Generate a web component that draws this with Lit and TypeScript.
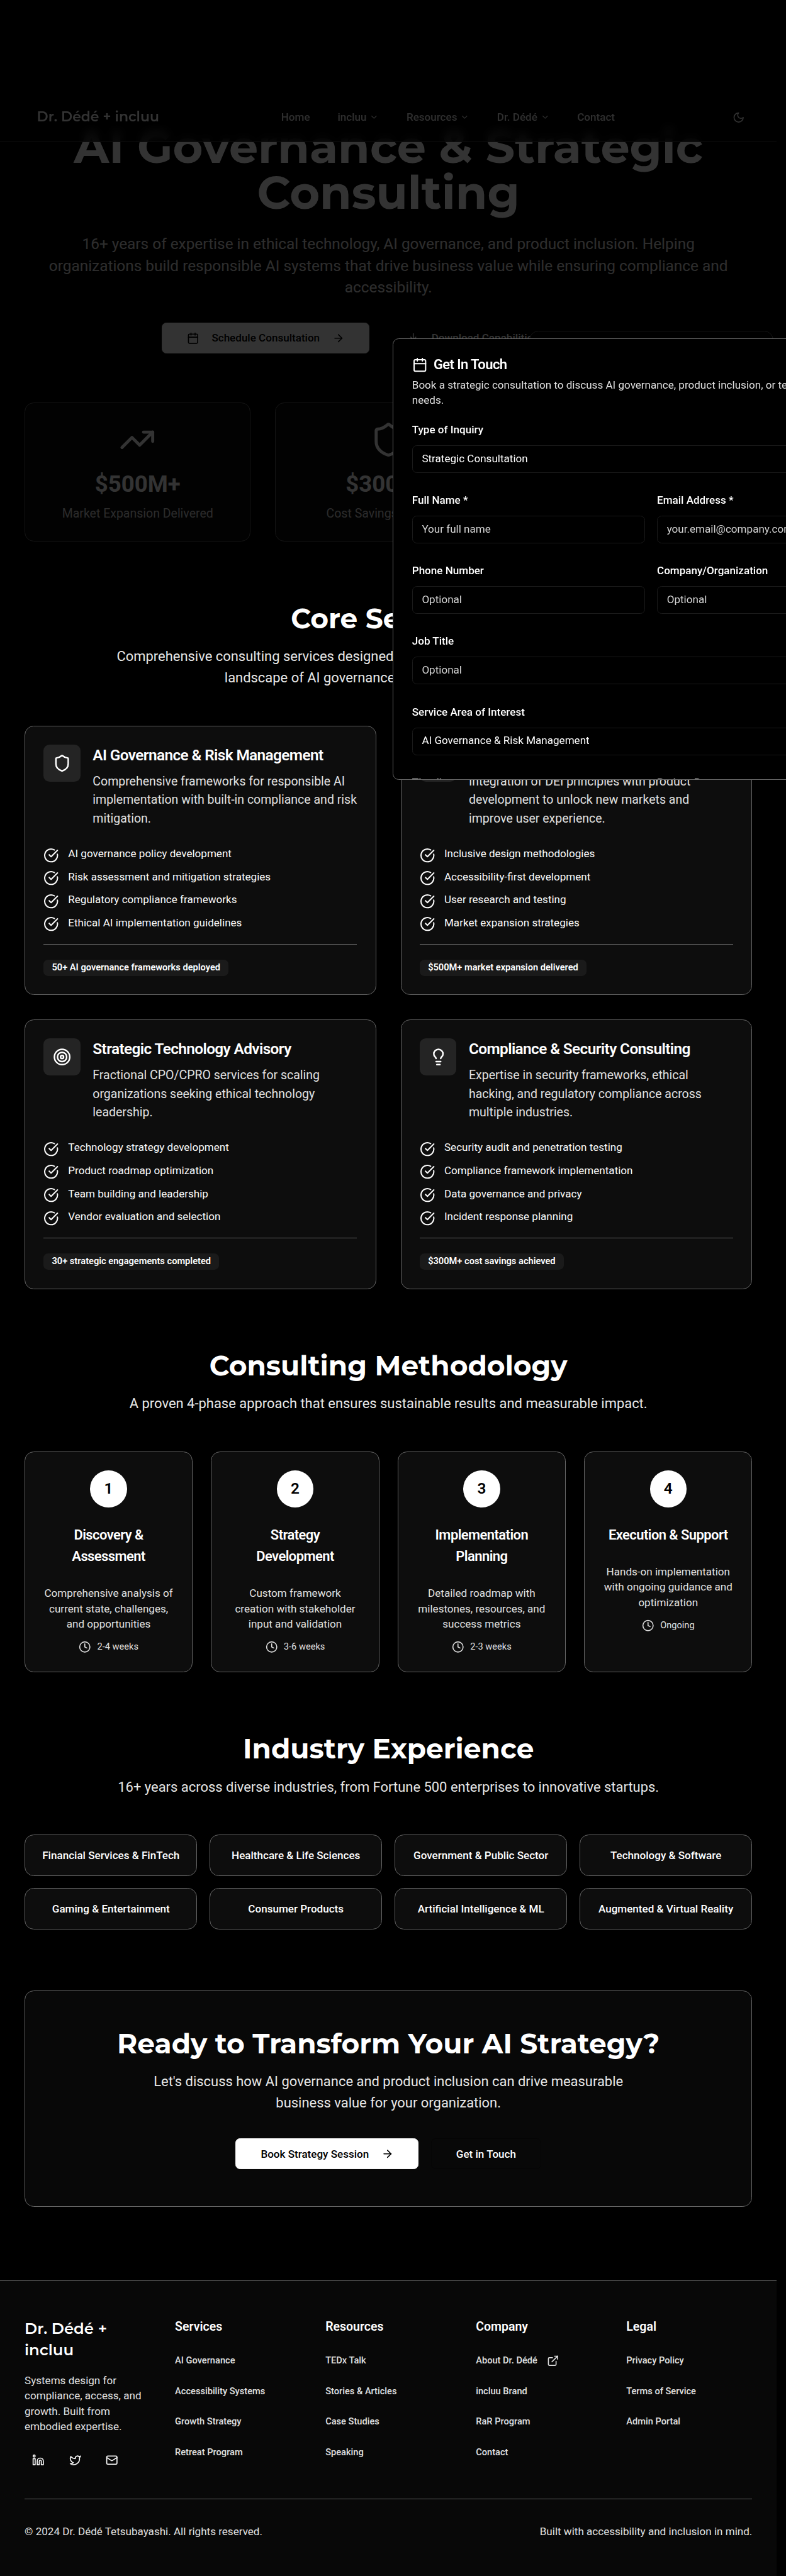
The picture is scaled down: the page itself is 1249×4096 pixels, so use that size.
import { LitElement, html, css, svg, type TemplateResult, type SVGTemplateResult } from "lit";
import { customElement } from "lit/decorators.js";

const ICONS: Record<string, SVGTemplateResult> = {
  calendar: svg`<path d="M8 2v4"/><path d="M16 2v4"/><rect width="18" height="18" x="3" y="4" rx="2"/><path d="M3 10h18"/>`,
  arrow: svg`<path d="M5 12h14"/><path d="m12 5 7 7-7 7"/>`,
  download: svg`<path d="M12 15V3"/><path d="M21 15v4a2 2 0 0 1-2 2H5a2 2 0 0 1-2-2v-4"/><path d="m7 10 5 5 5-5"/>`,
  chevron: svg`<path d="m6 9 6 6 6-6"/>`,
  moon: svg`<path d="M12 3a6 6 0 0 0 9 9 9 9 0 1 1-9-9Z"/>`,
  trending: svg`<path d="m22 7-8.5 8.5-5-5L2 17"/><path d="M16 7h6v6"/>`,
  shield: svg`<path d="M20 13c0 5-3.5 7.5-7.66 8.95a1 1 0 0 1-.67-.01C7.5 20.5 4 18 4 13V6a1 1 0 0 1 1-1c2 0 4.5-1.2 6.24-2.72a1.17 1.17 0 0 1 1.52 0C14.51 3.81 17 5 19 5a1 1 0 0 1 1 1z"/>`,
  users: svg`<path d="M16 21v-2a4 4 0 0 0-4-4H6a4 4 0 0 0-4 4v2"/><circle cx="9" cy="7" r="4"/><path d="M22 21v-2a4 4 0 0 0-3-3.87"/><path d="M16 3.13a4 4 0 0 1 0 7.75"/>`,
  target: svg`<circle cx="12" cy="12" r="10"/><circle cx="12" cy="12" r="6"/><circle cx="12" cy="12" r="2"/>`,
  bulb: svg`<path d="M15 14c.2-1 .7-1.7 1.5-2.5 1-.9 1.5-2.2 1.5-3.5A6 6 0 0 0 6 8c0 1 .2 2.2 1.5 3.5.7.7 1.3 1.5 1.5 2.5"/><path d="M9 18h6"/><path d="M10 22h4"/>`,
  check: svg`<path d="M21.801 10A10 10 0 1 1 17 3.335"/><path d="m9 11 3 3L22 4"/>`,
  clock: svg`<circle cx="12" cy="12" r="10"/><path d="M12 6v6l4 2"/>`,
  external: svg`<path d="M15 3h6v6"/><path d="M10 14 21 3"/><path d="M18 13v6a2 2 0 0 1-2 2H5a2 2 0 0 1-2-2V8a2 2 0 0 1 2-2h6"/>`,
  linkedin: svg`<path d="M16 8a6 6 0 0 1 6 6v7h-4v-7a2 2 0 0 0-4 0v7h-4v-7a6 6 0 0 1 6-6z"/><rect width="4" height="12" x="2" y="9"/><circle cx="4" cy="4" r="2"/>`,
  twitter: svg`<path d="M22 4s-.7 2.1-2 3.4c1.6 10-9.4 17.3-18 11.6 2.2.1 4.4-.6 6-2C3 15.5.5 9.6 3 5c2.2 2.6 5.6 4.1 9 4-.9-4.2 4-6.6 7-3.8 1.1 0 3-1.2 3-1.2z"/>`,
  mail: svg`<rect width="20" height="16" x="2" y="4" rx="2"/><path d="m22 7-8.97 5.7a1.94 1.94 0 0 1-2.06 0L2 7"/>`,
};

const icon = (name: string, size: string): TemplateResult =>
  html`<svg class="ico ${size}" viewBox="0 0 24 24" fill="none" stroke="currentColor" stroke-width="2" stroke-linecap="round" stroke-linejoin="round">${ICONS[name]}</svg>`;

const STATS = [
  { icon: "trending", value: "$500M+", label: "Market Expansion Delivered" },
  { icon: "shield", value: "$300M+", label: "Cost Savings Achieved" },
  { icon: "users", value: "50+", label: "AI Frameworks Deployed" },
];

const SERVICES = [
  {
    icon: "shield",
    title: "AI Governance & Risk Management",
    text: "Comprehensive frameworks for responsible AI implementation with built-in compliance and risk mitigation.",
    items: ["AI governance policy development", "Risk assessment and mitigation strategies", "Regulatory compliance frameworks", "Ethical AI implementation guidelines"],
    badge: "50+ AI governance frameworks deployed",
  },
  {
    icon: "users",
    title: "Product Inclusion Strategy",
    text: "Integration of DEI principles with product development to unlock new markets and improve user experience.",
    items: ["Inclusive design methodologies", "Accessibility-first development", "User research and testing", "Market expansion strategies"],
    badge: "$500M+ market expansion delivered",
  },
  {
    icon: "target",
    title: "Strategic Technology Advisory",
    text: "Fractional CPO/CPRO services for scaling organizations seeking ethical technology leadership.",
    items: ["Technology strategy development", "Product roadmap optimization", "Team building and leadership", "Vendor evaluation and selection"],
    badge: "30+ strategic engagements completed",
  },
  {
    icon: "bulb",
    title: "Compliance & Security Consulting",
    text: "Expertise in security frameworks, ethical hacking, and regulatory compliance across multiple industries.",
    items: ["Security audit and penetration testing", "Compliance framework implementation", "Data governance and privacy", "Incident response planning"],
    badge: "$300M+ cost savings achieved",
  },
];

const PHASES = [
  { title: ["Discovery &", "Assessment"], text: "Comprehensive analysis of current state, challenges, and opportunities", time: "2-4 weeks" },
  { title: ["Strategy", "Development"], text: "Custom framework creation with stakeholder input and validation", time: "3-6 weeks" },
  { title: ["Implementation", "Planning"], text: "Detailed roadmap with milestones, resources, and success metrics", time: "2-3 weeks" },
  { title: ["Execution & Support"], text: "Hands-on implementation with ongoing guidance and optimization", time: "Ongoing" },
];

const INDUSTRIES = [
  "Financial Services & FinTech", "Healthcare & Life Sciences", "Government & Public Sector", "Technology & Software",
  "Gaming & Entertainment", "Consumer Products", "Artificial Intelligence & ML", "Augmented & Virtual Reality",
];

const FOOTER = [
  { title: "Services", links: ["AI Governance", "Accessibility Systems", "Growth Strategy", "Retreat Program"] },
  { title: "Resources", links: ["TEDx Talk", "Stories & Articles", "Case Studies", "Speaking"] },
  { title: "Company", links: ["About Dr. Dédé", "incluu Brand", "RaR Program", "Contact"] },
  { title: "Legal", links: ["Privacy Policy", "Terms of Service", "Admin Portal"] },
];

const NAV = [
  { label: "Home", menu: false },
  { label: "incluu", menu: true },
  { label: "Resources", menu: true },
  { label: "Dr. Dédé", menu: true },
  { label: "Contact", menu: false },
];

@customElement("app-root")
export class AppRoot extends LitElement {
  static styles = css`
    :host { display: block; background: #000; overflow: hidden; }
    * { box-sizing: border-box; }
    h1, h2, h3, h4, p, ul { margin: 0; padding: 0; }
    ul { list-style: none; }
    .page {
      zoom: 0.97578;
      position: relative;
      width: 1280px;
      height: 4198px;
      overflow: hidden;
      background: #000;
      color: #fff;
      font-family: Roboto, "Liberation Sans", sans-serif;
      font-size: 20px;
      line-height: 30px;
    }
    .body { width: 1265px; }
    .ico { display: block; flex: none; }
    .i15 { width: 15px; height: 15px; }
    .i20 { width: 20px; height: 20px; }
    .i25 { width: 25px; height: 25px; }
    .i30 { width: 30px; height: 30px; }
    .i60 { width: 60px; height: 60px; }

    .header {
      position: absolute;
      top: 151px;
      left: 0;
      width: 1265px;
      height: 81px;
      padding: 0 40px;
      display: flex;
      align-items: center;
      justify-content: space-between;
      border-bottom: 1px solid #4a4a4a;
      background: rgba(0, 0, 0, 0.76);
      backdrop-filter: blur(8px);
    }
    .logo { font: 600 22.5px/35px Montserrat, sans-serif; padding: 0 20px; }
    .nav { display: flex; gap: 5px; }
    .nav-item { display: flex; align-items: center; gap: 5px; padding: 0 20px; font-size: 17.5px; font-weight: 500; line-height: 25px; color: #e6e6e6; }
    .theme { width: 45px; height: 45px; display: flex; align-items: center; justify-content: center; }

    .hero { padding: 200.6px 40px 0; text-align: center; }
    .hero-title { font: 700 75px/75px Montserrat, sans-serif; }
    .hero-text { margin: 30px auto 0; max-width: 1120px; font-size: 25px; line-height: 35px; color: #e0e0e0; }
    .actions { display: flex; justify-content: center; gap: 20px; margin-top: 40px; }
    .btn { display: flex; align-items: center; gap: 20px; height: 50px; padding: 0 40px; border: 1px solid transparent; border-radius: 7.5px; font-size: 17.5px; font-weight: 500; line-height: 25px; white-space: nowrap; }
    .btn-primary { background: #fff; border-color: #f2f2f2; color: #000; }
    .btn-outline { border-color: rgba(0, 0, 0, 0.3); }
    .btn-download { padding-right: 38px; }
    .stats { display: grid; grid-template-columns: repeat(3, 1fr); gap: 40px; margin-top: 80px; }
    .card { border: 1px solid #666; border-radius: 15px; background: #0d0d0d; padding: 30px; }
    .stat { display: flex; flex-direction: column; align-items: center; }
    .stat-value { margin-top: 20px; font-size: 37.5px; line-height: 45px; font-weight: 700; }
    .stat-label { margin-top: 10px; color: #d6d6d6; }

    .section { padding: 100px 40px 0; }
    .heading { font: 700 45px/50px Montserrat, sans-serif; text-align: center; }
    .lead { margin: 20px auto 0; font-size: 22.5px; line-height: 35px; text-align: center; color: #e6e6e6; }
    .lead-wide { max-width: 960px; }
    .lead-cta { max-width: 840px; }

    .services { display: grid; grid-template-columns: 1fr 1fr; gap: 40px; margin-top: 60px; }
    .service-head { display: flex; gap: 20px; }
    .service-icon { flex: none; width: 60px; height: 60px; padding: 15px; border-radius: 10px; background: #242424; }
    .service-title { font-size: 25px; line-height: 35px; font-weight: 600; letter-spacing: -0.025em; white-space: nowrap; }
    .service-text { margin-top: 10px; color: #e0e0e0; }
    .checks { display: flex; flex-direction: column; gap: 10px; margin-top: 30px; }
    .check { display: flex; gap: 15px; height: 27.5px; font-size: 17.5px; line-height: 25px; color: #fafafa; }
    .check .ico { margin-top: 2.5px; }
    .service-foot { margin-top: 20px; padding-top: 24px; border-top: 1px solid #666; display: flex; }
    .badge { height: 27px; padding: 3.5px 13.5px; border-radius: 7.5px; background: #1a1a1a; font-size: 15px; line-height: 20px; font-weight: 600; }

    .phases { display: grid; grid-template-columns: repeat(4, 1fr); gap: 30px; margin-top: 60px; }
    .phase { display: flex; flex-direction: column; align-items: center; text-align: center; }
    .num { width: 60px; height: 60px; border-radius: 50%; background: #fff; color: #000; font-size: 25px; line-height: 60px; font-weight: 600; }
    .phase-title { margin-top: 27.5px; font-size: 22.5px; line-height: 35px; font-weight: 600; letter-spacing: -0.025em; white-space: nowrap; }
    .phase-line { display: block; }
    .phase-text { margin-top: 30px; font-size: 17.5px; line-height: 25px; color: #e0e0e0; }
    .phase-time { display: flex; align-items: center; gap: 10px; margin-top: 15px; font-size: 15px; line-height: 20px; color: #e0e0e0; }

    .industries { display: grid; grid-template-columns: repeat(4, 1fr); gap: 20px; margin-top: 60px; }
    .industry { padding: 20px 10px; font-size: 17.5px; line-height: 25px; font-weight: 500; text-align: center; white-space: nowrap; }
    .cta { padding: 60px; background: #080808; }

    .footer { margin-top: 120px; padding: 60px 40px; border-top: 1px solid #666; background: #080808; }
    .footer-grid { display: grid; grid-template-columns: repeat(5, 1fr); gap: 40px; padding-bottom: 40px; }
    .footer-logo { font: 600 25px/35px Montserrat, sans-serif; }
    .footer-text { margin-top: 20px; font-size: 17.5px; line-height: 25px; color: #e0e0e0; white-space: nowrap; }
    .social { display: flex; gap: 15px; margin-top: 20px; }
    .social-item { width: 45px; height: 45px; display: flex; align-items: center; justify-content: center; }
    .footer-head { font-size: 20px; line-height: 30px; font-weight: 600; }
    .links { display: flex; flex-direction: column; gap: 10px; margin-top: 20px; }
    .link { display: flex; align-items: center; gap: 15px; height: 40px; font-size: 15px; line-height: 20px; font-weight: 500; color: #e0e0e0; white-space: nowrap; }
    .legal { display: flex; justify-content: space-between; padding-top: 40px; border-top: 1px solid #666; font-size: 17.5px; line-height: 25px; color: #e0e0e0; }

    .float-panel { position: absolute; left: 861.5px; top: 539px; width: 398px; height: 200px; border: 1px solid #666; border-radius: 15px; background: #000; }
    .scrim { position: absolute; left: 0; top: 0; width: 1280px; height: 920px; background: rgba(0, 0, 0, 0.8); }
    .dialog { position: absolute; left: 640px; top: 551px; width: 840px; height: 720px; padding: 30px; overflow: hidden; border: 1px solid #666; border-radius: 10px; background: #000; }
    .dialog-head { display: flex; gap: 10px; height: 25px; align-items: center; }
    .dialog-title { font-size: 22.5px; line-height: 22.5px; font-weight: 600; letter-spacing: -0.025em; }
    .dialog-text { margin-top: 7.5px; font-size: 17.5px; line-height: 25px; color: #e0e0e0; }
    .form { display: flex; flex-direction: column; gap: 30px; margin-top: 21px; }
    .pair { display: grid; grid-template-columns: 1fr 1fr; gap: 20px; }
    .label { display: block; font-size: 17.5px; line-height: 30px; font-weight: 500; }
    .field { height: 45px; margin-top: 10px; padding: 8px 15px; border: 1px solid #1a1a1a; border-radius: 7.5px; font-size: 17.5px; line-height: 25px; }
    .hint { color: #d4d4d4; }
  `;

  private field(label: string, value: string, hint = true) {
    return html`<div><span class="label">${label}</span><div class="field ${hint ? "hint" : ""}">${value}</div></div>`;
  }

  render() {
    return html`<div class="page">
      <div class="body">
        <section class="hero">
          <h1 class="hero-title">AI Governance &amp; Strategic Consulting</h1>
          <p class="hero-text">16+ years of expertise in ethical technology, AI governance, and product inclusion. Helping organizations build responsible AI systems that drive business value while ensuring compliance and accessibility.</p>
          <div class="actions">
            <div class="btn btn-primary">${icon("calendar", "i20")}<span>Schedule Consultation</span>${icon("arrow", "i20")}</div>
            <div class="btn btn-outline btn-download">${icon("download", "i20")}<span>Download Capabilities Statement</span></div>
          </div>
          <div class="stats">
            ${STATS.map((s) => html`<div class="card stat">${icon(s.icon, "i60")}<div class="stat-value">${s.value}</div><div class="stat-label">${s.label}</div></div>`)}
          </div>
        </section>

        <section class="section">
          <h2 class="heading">Core Services</h2>
          <p class="lead lead-wide">Comprehensive consulting services designed to help organizations navigate the complex<br />landscape of AI governance and inclusive technology.</p>
          <div class="services">
            ${SERVICES.map((s) => html`<article class="card">
              <div class="service-head">
                <div class="service-icon">${icon(s.icon, "i30")}</div>
                <div><h3 class="service-title">${s.title}</h3><p class="service-text">${s.text}</p></div>
              </div>
              <ul class="checks">${s.items.map((t) => html`<li class="check">${icon("check", "i25")}<span>${t}</span></li>`)}</ul>
              <div class="service-foot"><span class="badge">${s.badge}</span></div>
            </article>`)}
          </div>
        </section>

        <section class="section">
          <h2 class="heading">Consulting Methodology</h2>
          <p class="lead">A proven 4-phase approach that ensures sustainable results and measurable impact.</p>
          <div class="phases">
            ${PHASES.map((p, i) => html`<article class="card phase">
              <div class="num">${i + 1}</div>
              <h3 class="phase-title">${p.title.map((l) => html`<span class="phase-line">${l}</span>`)}</h3>
              <p class="phase-text">${p.text}</p>
              <div class="phase-time">${icon("clock", "i20")}<span>${p.time}</span></div>
            </article>`)}
          </div>
        </section>

        <section class="section">
          <h2 class="heading">Industry Experience</h2>
          <p class="lead">16+ years across diverse industries, from Fortune 500 enterprises to innovative startups.</p>
          <div class="industries">${INDUSTRIES.map((t) => html`<div class="card industry">${t}</div>`)}</div>
        </section>

        <section class="section">
          <div class="card cta">
            <h2 class="heading">Ready to Transform Your AI Strategy?</h2>
            <p class="lead lead-cta">Let's discuss how AI governance and product inclusion can drive measurable business value for your organization.</p>
            <div class="actions">
              <div class="btn btn-primary"><span>Book Strategy Session</span>${icon("arrow", "i20")}</div>
              <div class="btn btn-outline"><span>Get in Touch</span></div>
            </div>
          </div>
        </section>

        <footer class="footer">
          <div class="footer-grid">
            <div>
              <div class="footer-logo">Dr. Dédé +<br />incluu</div>
              <p class="footer-text">Systems design for<br />compliance, access, and<br />growth. Built from<br />embodied expertise.</p>
              <div class="social">${["linkedin", "twitter", "mail"].map((n) => html`<span class="social-item">${icon(n, "i20")}</span>`)}</div>
            </div>
            ${FOOTER.map((c) => html`<div>
              <h4 class="footer-head">${c.title}</h4>
              <div class="links">${c.links.map((l) => html`<span class="link">${l}${l === "About Dr. Dédé" ? icon("external", "i20") : ""}</span>`)}</div>
            </div>`)}
          </div>
          <div class="legal"><span>© 2024 Dr. Dédé Tetsubayashi. All rights reserved.</span><span>Built with accessibility and inclusion in mind.</span></div>
        </footer>
      </div>

      <header class="header">
        <div class="logo">Dr. Dédé + incluu</div>
        <nav class="nav">${NAV.map((n) => html`<span class="nav-item">${n.label}${n.menu ? icon("chevron", "i15") : ""}</span>`)}</nav>
        <div class="theme">${icon("moon", "i20")}</div>
      </header>
      <div class="float-panel"></div>
      <div class="scrim"></div>
      <div class="dialog">
        <div class="dialog-head">${icon("calendar", "i25")}<div class="dialog-title">Get In Touch</div></div>
        <p class="dialog-text">Book a strategic consultation to discuss AI governance, product inclusion, or technology leadership needs.</p>
        <div class="form">
          ${this.field("Type of Inquiry", "Strategic Consultation", false)}
          <div class="pair">${this.field("Full Name *", "Your full name")}${this.field("Email Address *", "your.email@company.com")}</div>
          <div class="pair">${this.field("Phone Number", "Optional")}${this.field("Company/Organization", "Optional")}</div>
          ${this.field("Job Title", "Optional")}
          ${this.field("Service Area of Interest", "AI Governance & Risk Management", false)}
          <div class="pair">${this.field("Timeline", "Select timeline", false)}${this.field("Budget Range", "Select budget", false)}</div>
        </div>
      </div>
    </div>`;
  }
}
